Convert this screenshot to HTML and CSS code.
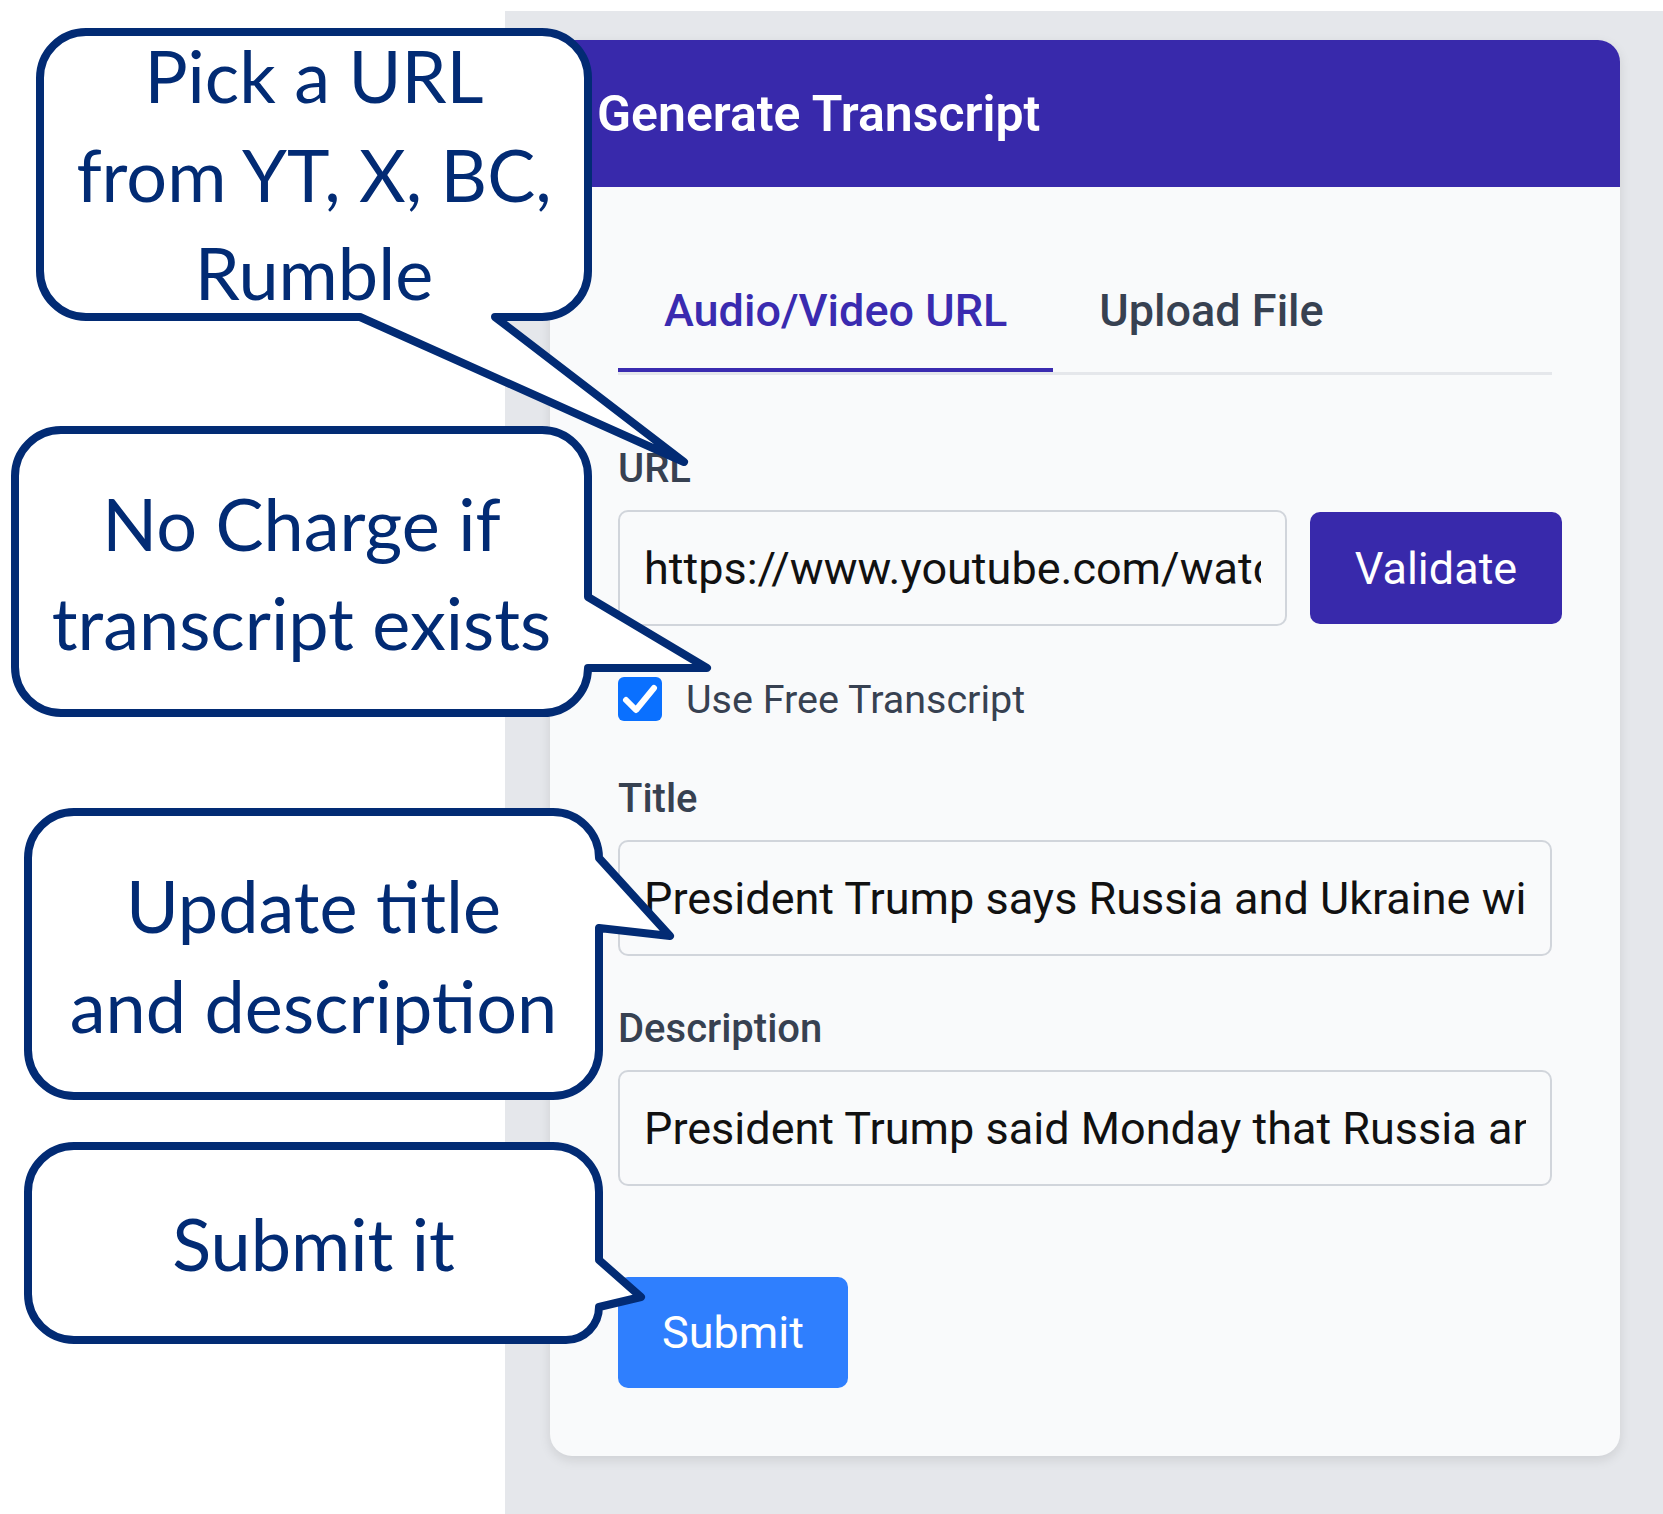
FILE: index.html
```html
<!DOCTYPE html>
<html lang="en">
<head>
<meta charset="UTF-8" />
<meta name="viewport" content="width=device-width, initial-scale=1" />
<title>Generate Transcript</title>
<link rel="stylesheet" href="styles.css">
</head>
<body>

<div class="page">
  <div class="gutter"></div>

  <main class="stage">
    <div class="card">
      <header class="card-head">Generate Transcript</header>

      <div class="card-body">
        <nav class="tabs">
          <button class="tab active" type="button">Audio/Video URL</button>
          <button class="tab" type="button">Upload File</button>
        </nav>

        <label class="field-label label-url" for="urlInput">URL</label>
        <div class="url-row">
          <input type="text" id="urlInput" class="field" value="https://www.youtube.com/watch?v=Qx7mP2rLk9c" />
          <button class="btn btn-validate" type="button">Validate</button>
        </div>

        <label class="check-row">
          <span class="check-box">
            <svg viewBox="0 0 44 44" width="44" height="44"><path d="M8 23 L18 33 L36 11" /></svg>
          </span>
          Use Free Transcript
        </label>

        <label class="field-label label-title" for="titleInput">Title</label>
        <input type="text" id="titleInput" class="field" value="President Trump says Russia and Ukraine will immediately start ceasefire talks" />

        <label class="field-label label-desc" for="descInput">Description</label>
        <input type="text" id="descInput" class="field" value="President Trump said Monday that Russia and Ukraine will immediately start negotiations" />

        <button class="btn btn-submit" type="submit">Submit</button>
      </div>
    </div>
  </main>

  <!-- callouts -->
  <div class="callout c1">
    <svg class="bubble" width="556" height="293"><g transform="translate(-36 -28)">
      <path d="M86 32 H542 A46 46 0 0 1 588 78 V271 A46 46 0 0 1 542 317 H495 L684 462 L360 317 H86 A46 46 0 0 1 40 271 V78 A46 46 0 0 1 86 32 Z" />
    </g></svg>
    <div class="callout-text">Pick a URL<br>from YT, X, BC,<br>Rumble</div>
  </div>

  <div class="callout c2">
    <svg class="bubble" width="581" height="291"><g transform="translate(-11 -426)">
      <path d="M61 430 H542 A46 46 0 0 1 588 476 V597 L707 668 L588 668 A45 45 0 0 1 543 713 H61 A46 46 0 0 1 15 667 V476 A46 46 0 0 1 61 430 Z" />
    </g></svg>
    <div class="callout-text">No Charge if<br>transcript exists</div>
  </div>

  <div class="callout c3">
    <svg class="bubble" width="579" height="292"><g transform="translate(-24 -808)">
      <path d="M74 812 H553 A46 46 0 0 1 599 858 L670 936 L599 928 V1050 A46 46 0 0 1 553 1096 H74 A46 46 0 0 1 28 1050 V858 A46 46 0 0 1 74 812 Z" />
    </g></svg>
    <div class="callout-text">Update title<br>and description</div>
  </div>

  <div class="callout c4">
    <svg class="bubble" width="579" height="202"><g transform="translate(-24 -1142)">
      <path d="M74 1146 H553 A46 46 0 0 1 599 1192 V1260 L641 1297 L599 1307 A33 33 0 0 1 566 1340 H74 A46 46 0 0 1 28 1294 V1192 A46 46 0 0 1 74 1146 Z" />
    </g></svg>
    <div class="callout-text">Submit it</div>
  </div>
</div>

</body>
</html>
```

FILE: styles.css
```css
body {
  margin: 0;
  background: #fff;
  font-family: Roboto, "Liberation Sans", sans-serif;
  color: #111;
}
.page {
  position: relative;
  display: flex;
  padding-top: 11px;
  min-height: 1503px;
}
.gutter {
  width: 505px;
  flex-shrink: 0;
}
.stage {
  flex: 1;
  background: #e5e7eb;
  padding: 29px 43px 40px 45px;
}
.card {
  background: #f9fafb;
  border-radius: 22px;
  overflow: hidden;
  box-shadow: 0 4px 12px rgba(0, 0, 0, 0.1);
}
.card-head {
  background: #3829ab;
  color: #fff;
  height: 147px;
  display: flex;
  align-items: center;
  padding-left: 47px;
  font-size: 50px;
  font-weight: 600;
}
.card-body {
  padding: 66px 68px 68px 68px;
}

/* tabs */
.tabs {
  display: flex;
  border-bottom: 3px solid #e5e7eb;
}
.tab {
  font-family: inherit;
  font-size: 45px;
  line-height: 54px;
  font-weight: 500;
  color: #374151;
  background: none;
  border: none;
  border-bottom: 4px solid transparent;
  padding: 31px 46px 30px;
  margin: 0;
  cursor: pointer;
}
.tab.active {
  color: #3a2bb0;
  border-bottom-color: #3a2bb0;
}

/* fields */
.field-label {
  display: block;
  font-size: 40px;
  line-height: 60px;
  font-weight: 500;
  color: #374151;
}
.label-url { margin-top: 64px; }
.label-title { margin-top: 40px; }
.label-desc { margin-top: 43px; }
.field-label + .url-row,
.field-label + .field {
  margin-top: 11px;
}
.field {
  display: block;
  box-sizing: border-box;
  width: 100%;
  height: 116px;
  padding: 0 24px;
  border: 2px solid #d1d5db;
  border-radius: 10px;
  background: #f9fafb;
  font-family: inherit;
  font-size: 45px;
  color: #111;
  outline: none;
}
.url-row {
  display: flex;
  align-items: center;
  gap: 23px;
  margin-right: -10px;
}
.url-row .field {
  flex: 1;
  width: auto;
  min-width: 0;
}

/* buttons */
.btn {
  font-family: inherit;
  font-size: 45px;
  color: #fff;
  border: none;
  border-radius: 10px;
  margin: 0;
  padding: 0;
  cursor: pointer;
}
.btn-validate {
  width: 252px;
  height: 112px;
  background: #3829ab;
}
.btn-submit {
  display: block;
  width: 230px;
  height: 111px;
  margin-top: 91px;
  background: #2f7ffe;
}

/* checkbox */
.check-row {
  display: flex;
  align-items: center;
  gap: 24px;
  height: 60px;
  margin-top: 43px;
  font-size: 39.5px;
  color: #374151;
}
.check-box {
  width: 44px;
  height: 44px;
  border-radius: 6px;
  background: #0a70ff;
  display: flex;
}
.check-box path {
  fill: none;
  stroke: #fff;
  stroke-width: 6;
  stroke-linecap: round;
  stroke-linejoin: round;
}

/* speech bubbles */
.callout {
  position: absolute;
  color: #022b74;
  font-family: Lato, "Noto Sans", sans-serif;
  font-size: 72px;
  line-height: 98.5px;
  text-align: center;
}
.bubble {
  position: absolute;
  left: 0;
  top: 0;
  overflow: visible;
}
.bubble path {
  fill: #fff;
  stroke: #022b74;
  stroke-width: 8;
  stroke-linejoin: round;
}
.callout-text {
  position: relative;
  white-space: nowrap;
}
.c1 { left: 36px; top: 28px; width: 556px; height: 293px; }
.c1 .callout-text { top: -2px; }
.c2 { left: 11px; top: 426px; width: 581px; height: 291px; }
.c2 .callout-text { top: 48px; }
.c3 { left: 24px; top: 808px; width: 579px; height: 292px; line-height: 100px; }
.c3 .callout-text { top: 47px; }
.c4 { left: 24px; top: 1142px; width: 579px; height: 202px; }
.c4 .callout-text { top: 52px; }
```
